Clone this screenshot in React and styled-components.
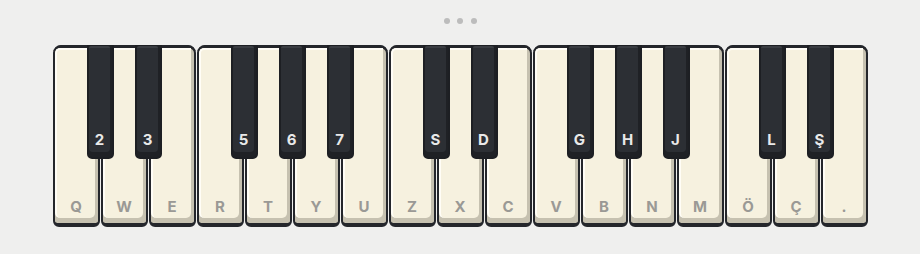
import React from "react";
import styled, { createGlobalStyle } from "styled-components";

const GlobalStyle = createGlobalStyle`
  html, body {
    margin: 0;
    padding: 0;
    background: #efefee;
    font-family: Inter, "Noto Sans", "Liberation Sans", sans-serif;
  }
`;

const Page = styled.div`
  width: 920px;
  height: 254px;
  display: flex;
  flex-direction: column;
  align-items: center;
  padding-top: 18px;
  box-sizing: border-box;
`;

const Dots = styled.div`
  display: flex;
  gap: 7.5px;
  margin-bottom: 21px;
`;

const Dot = styled.span`
  width: 6px;
  height: 6px;
  border-radius: 50%;
  background: #bcbcbc;
`;

const Keyboard = styled.div`
  display: flex;
  gap: 1px;
`;

const Group = styled.div`
  position: relative;
  display: flex;
  gap: 1px;
  border-radius: 9px 9px 0 0;
  background: linear-gradient(#24262b 0 6px, transparent 6px);
`;

const WhiteKey = styled.div`
  width: 47px;
  height: 182px;
  box-sizing: border-box;
  display: flex;
  background: #c6c1b0;
  border: 2px solid #24262b;
  border-top-width: 3px;
  border-bottom-width: 4px;
  border-radius: ${(p) =>
    `${p.$first ? 8 : 0}px ${p.$last ? 8 : 0}px 6px 6px`};
`;

const Face = styled.div`
  flex: 1;
  margin: 0 3px 5px 0;
  background: #f6f1df;
  border-left: 2px solid #fffdf6;
  border-top: 2px solid #fffdf6;
  border-radius: ${(p) => `${p.$first ? 5 : 0}px 0 5px 5px`};
  display: flex;
  align-items: flex-end;
  justify-content: center;
  padding-bottom: 2px;
  box-sizing: border-box;
`;

const WhiteLabel = styled.span`
  font-size: 15px;
  font-weight: 700;
  color: #9a9995;
  line-height: 18px;
  margin-left: 1px;
`;

const BlackKey = styled.div`
  position: absolute;
  top: 0;
  width: 27px;
  height: 114px;
  box-sizing: border-box;
  border: 2px solid #1d1f23;
  border-top-width: 1px;
  border-radius: 0 0 5px 5px;
  background: #1f2125;
  display: flex;
`;

const BlackFace = styled.div`
  flex: 1;
  margin: 0 2px 5px 0;
  background: linear-gradient(#3a3d42 0 2px, #2c2f34 2px);
  border-radius: 2px 2px 4px 4px;
  display: flex;
  align-items: flex-end;
  justify-content: center;
  padding-bottom: 4px;
`;

const BlackLabel = styled.span`
  font-size: 15px;
  font-weight: 700;
  color: #e9e9e9;
  line-height: 17px;
  margin-left: 1px;
`;

const groups = [
  { whites: ["Q", "W", "E"], blacks: [[1, "2"], [2, "3"]] },
  { whites: ["R", "T", "Y", "U"], blacks: [[1, "5"], [2, "6"], [3, "7"]] },
  { whites: ["Z", "X", "C"], blacks: [[1, "S"], [2, "D"]] },
  { whites: ["V", "B", "N", "M"], blacks: [[1, "G"], [2, "H"], [3, "J"]] },
  { whites: ["Ö", "Ç", "."], blacks: [[1, "L"], [2, "Ş"]] },
];

export default function App() {
  return (
    <>
      <GlobalStyle />
      <Page>
        <Dots>
          <Dot />
          <Dot />
          <Dot />
        </Dots>
        <Keyboard>
          {groups.map((g, gi) => (
            <Group key={gi}>
              {g.whites.map((w, i) => (
                <WhiteKey
                  key={w}
                  $first={i === 0}
                  $last={i === g.whites.length - 1}
                >
                  <Face $first={i === 0}>
                    <WhiteLabel>{w}</WhiteLabel>
                  </Face>
                </WhiteKey>
              ))}
              {g.blacks.map(([pos, label]) => (
                <BlackKey key={label} style={{ left: pos * 48 - 14 }}>
                  <BlackFace>
                    <BlackLabel>{label}</BlackLabel>
                  </BlackFace>
                </BlackKey>
              ))}
            </Group>
          ))}
        </Keyboard>
      </Page>
    </>
  );
}
